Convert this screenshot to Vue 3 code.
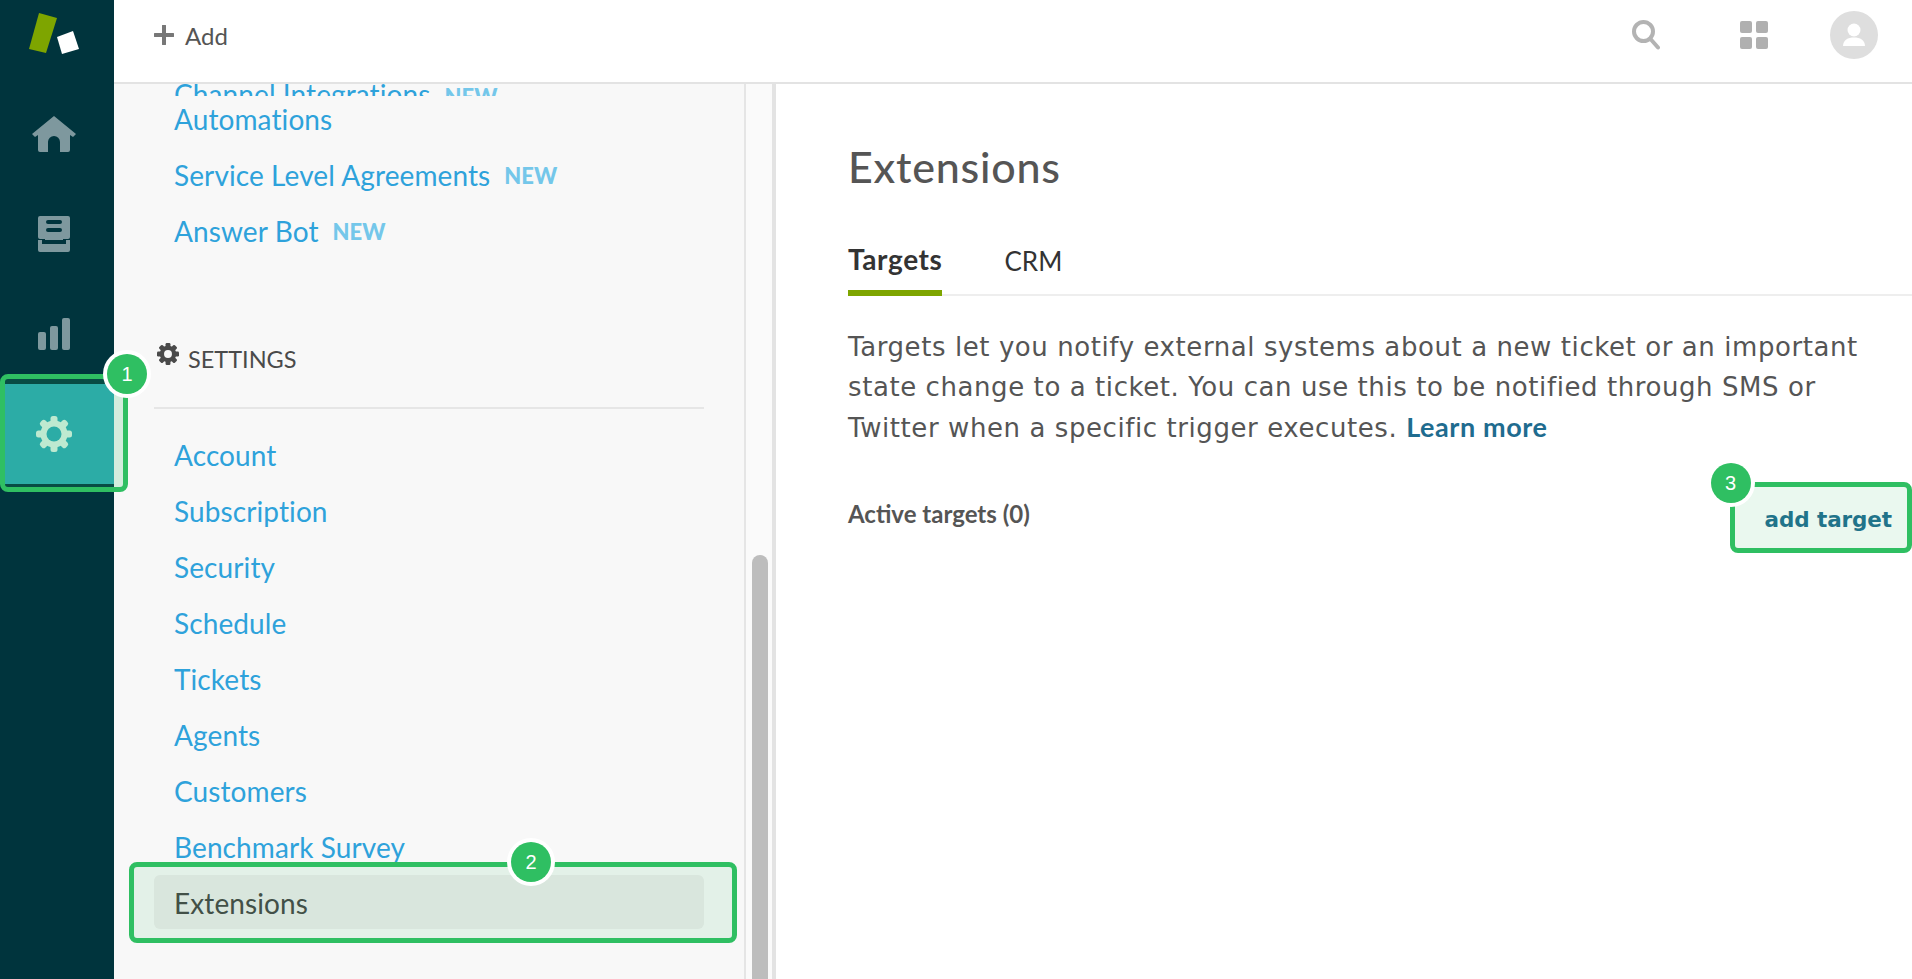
<script setup>
const upper = [
  { label: 'Automations' },
  { label: 'Service Level Agreements', isNew: true },
  { label: 'Answer Bot', isNew: true },
]
const settings = ['Account', 'Subscription', 'Security', 'Schedule', 'Tickets', 'Agents', 'Customers', 'Benchmark Survey']
const teeth = [0, 45, 90, 135]
</script>

<template>
  <div class="app">
    <aside class="rail">
      <div class="logo">
        <svg width="114" height="84" viewBox="0 0 114 84">
          <polygon points="39,13 57,18 46,53 29,49" fill="#7ea500" />
          <polygon points="57,37 73,31 79,49 62,54" fill="#fff" />
        </svg>
      </div>
      <div class="rail-item">
        <svg width="44" height="36" viewBox="0 0 44 36">
          <path d="M22 0L44 18L41 21L38 19V34a2 2 0 0 1-2 2H28V26a6 6 0 0 0-12 0V36H8a2 2 0 0 1-2-2V19L3 21L0 18Z" fill="#7e989e" />
        </svg>
      </div>
      <div class="rail-item">
        <svg width="32" height="36" viewBox="0 0 32 36">
          <path fill-rule="evenodd" d="M2 0H30a2 2 0 0 1 2 2V21a2 2 0 0 1-2 2H25v1H7v-1H2a2 2 0 0 1-2-2V2A2 2 0 0 1 2 0ZM10 4a2 2 0 0 0 0 4H22a2 2 0 0 0 0-4ZM10 12a2 2 0 0 0 0 4H22a2 2 0 0 0 0-4Z" fill="#7e989e" />
          <path d="M0 24H4V28H28V24H32V34a2 2 0 0 1-2 2H2a2 2 0 0 1-2-2Z" fill="#7e989e" />
        </svg>
      </div>
      <div class="rail-item">
        <svg width="32" height="32" viewBox="0 0 32 32" fill="#7e989e">
          <rect x="0" y="14" width="8" height="18" rx="2" />
          <rect x="12" y="8" width="8" height="24" rx="2" />
          <rect x="24" y="0" width="8" height="32" rx="2" />
        </svg>
      </div>
      <div class="rail-item active">
        <svg width="36" height="36" viewBox="0 0 36 36">
          <circle cx="18" cy="18" r="10.5" fill="none" stroke="#dff3e8" stroke-width="6" />
          <g v-for="a in teeth" :key="a" :transform="`rotate(${a} 18 18)`">
            <rect x="14.5" y="0" width="7" height="36" rx="2.5" fill="#dff3e8" />
          </g>
          <circle cx="18" cy="18" r="7.5" fill="#2da9b5" />
        </svg>
        <div class="callout callout-rail">
          <span class="badge">1</span>
        </div>
      </div>
    </aside>

    <div class="right">
      <header class="topbar">
        <div class="add">
          <svg width="20" height="20" viewBox="0 0 20 20">
            <path d="M10 1V19M1 10H19" stroke="#777" stroke-width="4" stroke-linecap="round" />
          </svg>
          <span>Add</span>
        </div>
        <div class="top-icons">
          <svg width="28" height="30" viewBox="0 0 28 30" fill="none" stroke="#b3b3b3">
            <circle cx="11.5" cy="11.5" r="9.5" stroke-width="4" />
            <path d="M18.5 19L26 27.5" stroke-width="4" stroke-linecap="round" />
          </svg>
          <svg class="grid-icon" width="28" height="28" viewBox="0 0 28 28" fill="#b0b0b0">
            <rect width="12" height="12" rx="2" />
            <rect x="16" width="12" height="12" rx="2" />
            <rect y="16" width="12" height="12" rx="2" />
            <rect x="16" y="16" width="12" height="12" rx="2" />
          </svg>
          <svg width="48" height="48" viewBox="0 0 48 48">
            <circle cx="24" cy="24" r="24" fill="#dedede" />
            <circle cx="24" cy="19" r="6.5" fill="#fff" />
            <path d="M13 35c0-6 5-8.500 11-8.500s11 2.500 11 8.500Z" fill="#fff" />
          </svg>
        </div>
      </header>

      <div class="body">
        <nav class="panel">
          <div class="clipped">
            <span class="link">Channel Integrations</span><span class="new">NEW</span>
          </div>
          <div v-for="item in upper" :key="item.label" class="row">
            <span class="link">{{ item.label }}</span>
            <span v-if="item.isNew" class="new">NEW</span>
          </div>

          <div class="section">
            <svg class="section-gear" width="22" height="22" viewBox="0 0 36 36">
              <circle cx="18" cy="18" r="10.500" fill="none" stroke="#4a4a4a" stroke-width="6" />
              <g v-for="a in teeth" :key="a" :transform="`rotate(${a} 18 18)`">
                <rect x="14" y="0" width="8" height="36" rx="2" fill="#4a4a4a" />
              </g>
              <circle cx="18" cy="18" r="6.500" fill="#f8f8f8" />
            </svg>
            <span>SETTINGS</span>
          </div>

          <div v-for="item in settings" :key="item" class="row">
            <span class="link">{{ item }}</span>
          </div>
          <div class="row current">
            <span>Extensions</span>
            <div class="callout callout-nav">
              <span class="badge">2</span>
            </div>
          </div>
        </nav>

        <div class="track">
          <div class="thumb"></div>
        </div>

        <main class="main">
          <h1>Extensions</h1>
          <div class="tabs">
            <span class="tab on">Targets</span>
            <span class="tab">CRM</span>
          </div>
          <p class="intro">
            Targets let you notify external systems about a new ticket or an important
            state change to a ticket. You can use this to be notified through SMS or
            Twitter when a specific trigger executes.
            <a>Learn more</a>
          </p>
          <div class="list-head">
            <span class="count">Active targets (0)</span>
            <div class="add-target">
              add target
              <div class="callout callout-btn">
                <span class="badge">3</span>
              </div>
            </div>
          </div>
        </main>
      </div>
    </div>
  </div>
</template>

<style scoped>
.app {
  display: flex;
  height: 979px;
  overflow: hidden;
  font-family: Lato, "Open Sans", sans-serif;
  background: #fff;
}

.rail {
  width: 114px;
  flex: none;
  background: #00343d;
  position: relative;
  z-index: 2;
}

.logo {
  height: 84px;
}

.logo svg {
  display: block;
}

.rail-item {
  position: relative;
  height: 100px;
  padding-right: 6px;
  box-sizing: border-box;
  display: flex;
  align-items: center;
  justify-content: center;
}

.rail-item.active {
  background: #2da9b5;
}

.callout {
  position: absolute;
  box-sizing: border-box;
  border: 5px solid #2fbf62;
  border-radius: 8px;
  background: rgba(47, 191, 98, 0.1);
}

.callout-rail {
  left: 0;
  right: -14px;
  top: -10px;
  bottom: -8px;
  background: rgba(47, 191, 98, 0.18);
}

.callout-nav {
  left: -25px;
  right: -33px;
  top: -13px;
  bottom: -14px;
}

.callout-btn {
  left: -35px;
  right: -20px;
  top: -25px;
  bottom: -21px;
}

.badge {
  position: absolute;
  width: 40px;
  height: 40px;
  border-radius: 50%;
  background: #2fbf62;
  box-shadow: 0 0 0 4px #fff;
  color: #fff;
  font: 400 20px/40px "Liberation Sans", sans-serif;
  letter-spacing: 0;
  text-align: center;
}

.callout-rail .badge {
  right: -24px;
  top: -25px;
}

.callout-nav .badge {
  left: 377px;
  top: -25px;
}

.callout-btn .badge {
  left: -24px;
  top: -24px;
}

.right {
  flex: 1;
  min-width: 0;
  display: flex;
  flex-direction: column;
}

.topbar {
  flex: none;
  box-sizing: content-box;
  height: 70px;
  border-bottom: 2px solid #e3e3e3;
  display: flex;
  align-items: center;
  justify-content: space-between;
  padding: 0 34px 12px 40px;
}

.add {
  display: flex;
  align-items: center;
  gap: 11px;
  font-size: 24px;
  color: #555;
}

.add svg {
  display: block;
}

.top-icons {
  display: flex;
  align-items: center;
  gap: 62px;
}

.top-icons svg {
  display: block;
}

.grid-icon {
  margin-left: 18px;
}

.body {
  flex: 1;
  min-height: 0;
  display: flex;
}

.panel {
  width: 630px;
  flex: none;
  box-sizing: border-box;
  background: #f8f8f8;
  padding: 0 40px;
  font-size: 28px;
  letter-spacing: 0.1px;
}

.clipped {
  height: 12px;
  overflow: hidden;
  line-height: 20px;
  padding-left: 20px;
  margin-bottom: -4px;
}

.clipped .new {
  margin-left: 14px;
}

.row {
  position: relative;
  box-sizing: border-box;
  height: 56px;
  padding: 0 0 2px 20px;
  display: flex;
  align-items: center;
  gap: 14px;
}

.link {
  color: #2ea2db;
}

.new {
  color: #74c7ea;
  font-weight: 900;
  font-size: 22px;
  letter-spacing: 0;
}

.section {
  margin-top: 71px;
  margin-bottom: 19px;
  height: 56px;
  border-bottom: 2px solid #e6e6e6;
  display: flex;
  align-items: center;
  font-size: 23.5px;
  letter-spacing: 0;
  color: #4a4a4a;
  padding-bottom: 20px;
  box-sizing: content-box;
}

.section-gear {
  margin: 0 9px 10px 3px;
}

.current {
  height: 54px;
  padding: 2px 0 0 20px;
  background: #ecebeb;
  border-radius: 6px;
  color: #444;
  margin-top: -1px;
}

.track {
  width: 26px;
  flex: none;
  box-sizing: content-box;
  background: #fafafa;
  border-left: 2px solid #e5e5e5;
  border-right: 4px solid #e3e3e3;
  padding-top: 471px;
  display: flex;
  justify-content: center;
}

.thumb {
  width: 16px;
  height: 500px;
  margin-left: 2px;
  background: #bdbdbd;
  border-radius: 8px 8px 0 0;
}

.main {
  flex: 1;
  min-width: 0;
  padding-left: 72px;
  color: #555;
}

h1 {
  margin: 58px 0 0;
  font-size: 43px;
  letter-spacing: 0.77px;
  font-weight: 500;
  line-height: 50px;
}

.tabs {
  margin-top: 48px;
  display: flex;
  gap: 62px;
  border-bottom: 2px solid #eee;
  height: 54px;
}

.tab {
  font-size: 26px;
  line-height: 38px;
  padding-top: 2px;
  color: #333;
}

.tab.on {
  font-size: 28px;
  letter-spacing: 0.6px;
  font-weight: 700;
  padding-top: 0;
  height: 56px;
  box-sizing: border-box;
  border-bottom: 6px solid #7ea500;
}

.intro {
  margin: 31px 0 0;
  width: 1030px;
  font-family: "DejaVu Sans", sans-serif;
  font-size: 26px;
  letter-spacing: 0.58px;
  line-height: 40px;
  color: #555;
}

.intro a {
  font-family: Lato, sans-serif;
  font-size: 27px;
  font-weight: 700;
  color: #1f6c8f;
}

.list-head {
  margin-top: 48px;
  display: flex;
  justify-content: space-between;
  align-items: center;
  height: 34px;
}

.count {
  font-size: 24px;
  font-weight: 700;
}

.add-target {
  position: relative;
  margin-top: 12px;
  margin-right: 20px;
  font-family: "DejaVu Sans", sans-serif;
  font-weight: 700;
  font-size: 21.5px;
  letter-spacing: -0.1px;
  color: #1f6c8f;
}
</style>

<style>
body {
  margin: 0;
}
</style>
